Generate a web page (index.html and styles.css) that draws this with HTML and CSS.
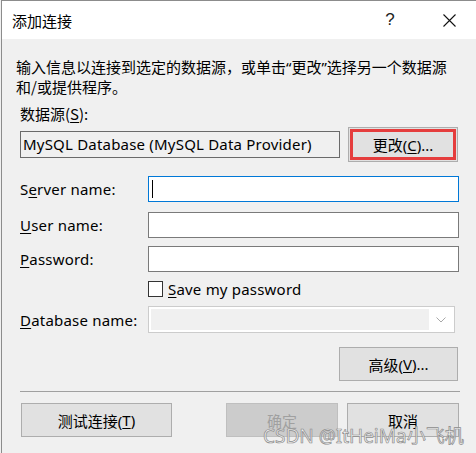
FILE: index.html
```html
<!DOCTYPE html>
<html lang="zh-CN">
<head>
<meta charset="utf-8">
<title>添加连接</title>
<link rel="stylesheet" href="styles.css">
</head>
<body>
<div class="window">
  <div class="titlebar">
    <span class="title">添加连接</span>
    <span class="tb-btn help">?</span>
    <span class="tb-btn close">
      <svg width="13" height="13" viewBox="0 0 13 13"><path d="M0.5 0.5 L12.5 12.5 M12.5 0.5 L0.5 12.5" stroke="#111" stroke-width="1.1" fill="none"/></svg>
    </span>
  </div>
  <div class="content">
    <p class="desc">输入信息以连接到选定的数据源，或单击<span class="q">“</span>更改<span class="q">”</span>选择另一个数据源<br>和/或提供程序。</p>
    <div class="ds-label">数据源(<u>S</u>):</div>
    <div class="ds-row">
      <div class="ds-box">MySQL Database (MySQL Data Provider)</div>
      <div class="btn btn-change">更改(<u>C</u>)...</div>
    </div>
    <div class="row row-server">
      <span class="lbl">S<u>e</u>rver name:</span>
      <div class="input focused"><span class="caret"></span></div>
    </div>
    <div class="row row-user">
      <span class="lbl"><u>U</u>ser name:</span>
      <div class="input"></div>
    </div>
    <div class="row row-pass">
      <span class="lbl"><u>P</u>assword:</span>
      <div class="input"></div>
    </div>
    <div class="row row-check">
      <span class="lbl"></span>
      <span class="checkbox"></span>
      <span class="check-label"><u>S</u>ave my password</span>
    </div>
    <div class="row row-db">
      <span class="lbl"><u>D</u>atabase name:</span>
      <div class="combo">
        <div class="combo-field"></div>
        <div class="combo-arrow">
          <svg width="10" height="6" viewBox="0 0 10 6"><path d="M0.5 0.5 L5 5 L9.5 0.5" stroke="#a8a8a8" stroke-width="1" fill="none"/></svg>
        </div>
      </div>
    </div>
    <div class="adv-row">
      <div class="btn btn-adv">高级(<u>V</u>)...</div>
    </div>
    <div class="sep"></div>
    <div class="bottom-row">
      <div class="btn btn-test">测试连接(<u>T</u>)</div>
      <div class="btn btn-ok">确定</div>
      <div class="btn btn-cancel">取消</div>
    </div>
  </div>
  <div class="watermark">CSDN @ItHeiMa小飞机</div>
</div>
</body>
</html>
```

FILE: styles.css
```css
* { box-sizing: border-box; }
html, body {
  margin: 0;
  padding: 0;
  background: #f0f0f0;
}
body {
  width: 476px;
  height: 453px;
  overflow: hidden;
  font-family: "Noto Sans", "Noto Sans CJK SC", sans-serif;
  font-size: 15px;
  color: #000;
}
u { text-decoration: underline; text-underline-offset: 2px; text-decoration-thickness: 1px; }

.window {
  position: relative;
  height: 453px;
  margin-left: 1px;
  border-top: 1px solid #8c8c8c;
  border-left: 1px solid #8c8c8c;
  background: #f0f0f0;
}

.titlebar {
  height: 38px;
  background: #fff;
  display: flex;
  align-items: center;
}
.title {
  padding-left: 10px;
  font-family: "Noto Sans CJK SC", sans-serif;
  font-size: 15px;
}
.tb-btn {
  width: 46px;
  height: 38px;
  display: flex;
  align-items: center;
  justify-content: center;
}
.help {
  margin-left: auto;
  margin-right: 13px;
  font-size: 17px;
  font-family: "Liberation Sans", sans-serif;
  color: #222;
}
.close { margin-right: 4px; }

.content {
  padding: 18px 16px 0 18px;
}
.desc {
  margin: 0 0 7px -4px;
  height: 40px;
  line-height: 20px;
  white-space: nowrap;
  font-family: "Noto Sans CJK SC", sans-serif;
  font-size: 15px;
}
.q { font-family: "Noto Sans", sans-serif; }
.ds-label {
  line-height: 20px;
  height: 20px;
  font-family: "Noto Sans CJK SC", sans-serif;
}
.ds-row {
  margin-top: 3px;
  height: 35px;
  display: flex;
  align-items: center;
}
.ds-box {
  width: 320px;
  height: 27px;
  border: 1px solid #6a6a6a;
  padding-left: 2px;
  line-height: 24px;
  white-space: nowrap;
  letter-spacing: 0.2px;
}
.btn {
  height: 35px;
  background: #e1e1e1;
  border: 1px solid #adadad;
  display: flex;
  align-items: center;
  justify-content: center;
  font-family: "Noto Sans", "Noto Sans CJK SC", sans-serif;
  font-size: 15px;
}
.btn-change {
  margin-left: 8px;
  width: 110px;
  box-shadow: inset 0 0 0 1px #e1e1e1, inset 0 0 0 4px #e53d3d;
}

.row {
  display: flex;
  align-items: center;
}
.lbl {
  width: 128px;
  flex: none;
  white-space: nowrap;
  letter-spacing: 0.2px;
}
.input {
  width: 311px;
  height: 26px;
  background: #fff;
  border: 1px solid #7a7a7a;
  position: relative;
}
.input.focused { border-color: #0078d7; }
.caret {
  position: absolute;
  left: 3px;
  top: 3px;
  width: 1px;
  height: 18px;
  background: #000;
}
.row-server { margin-top: 14px; }
.row-user { margin-top: 10px; }
.row-pass { margin-top: 8px; }
.row-check { margin-top: 9px; height: 16px; }
.checkbox {
  width: 15px;
  height: 16px;
  border: 1px solid #333;
  background: #fff;
  flex: none;
}
.check-label { margin-left: 5px; line-height: 16px; letter-spacing: 0.2px; }
.row-db { margin-top: 9px; }
.combo {
  width: 307px;
  height: 27px;
  border: 1px solid #cccccc;
  background: #fff;
  padding: 2px;
  display: flex;
}
.combo-field { flex: 1; background: #f0f0f0; }
.combo-arrow {
  width: 23px;
  display: flex;
  align-items: center;
  justify-content: center;
}

.adv-row {
  margin-top: 14px;
  display: flex;
  justify-content: flex-end;
  padding-right: 2px;
}
.btn-adv { width: 119px; height: 34px; }

.sep {
  margin-top: 10px;
  height: 1px;
  width: 440px;
  background: #a0a0a0;
}

.bottom-row {
  margin-top: 11px;
  display: flex;
}
.bottom-row .btn { height: 34px; }
.btn-test { width: 151px; margin-left: 1px; }
.btn-ok {
  width: 112px;
  margin-left: auto;
  background: #cccccc;
  border-color: #bfbfbf;
  color: #a0a0a0;
}
.btn-cancel { width: 112px; margin-left: 9px; margin-right: 1px; }

.watermark {
  position: absolute;
  left: 261px;
  top: 420px;
  font-family: "Noto Sans", "Noto Sans CJK SC", sans-serif;
  font-size: 19px;
  color: rgba(245, 245, 245, 0.85);
  -webkit-text-stroke: 0.7px #8a8a8a;
  white-space: nowrap;
}
```
